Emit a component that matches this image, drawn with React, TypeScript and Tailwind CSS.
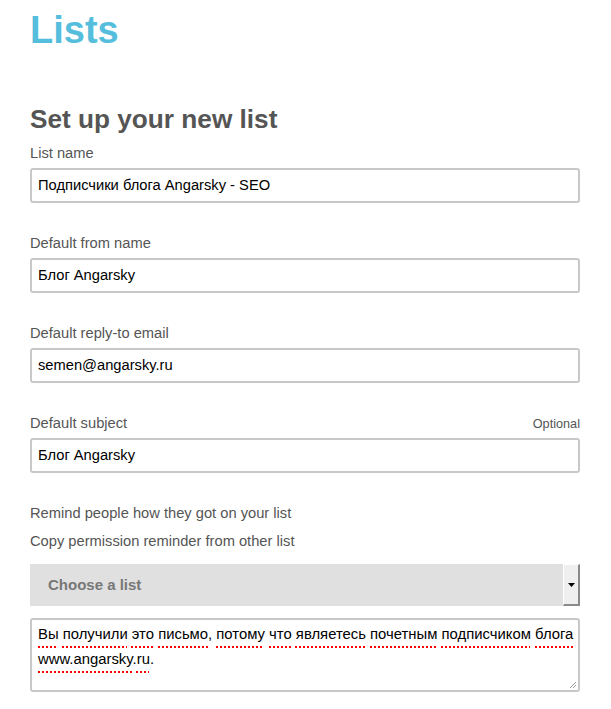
import React from "react";

const font = { fontFamily: '"Liberation Sans", Arial, sans-serif' };

function Field({ label, value, optional }: { label: string; value: string; optional?: boolean }) {
  return (
    <div className="flex flex-col">
      <div className="flex items-baseline justify-between h-[20px] leading-[20px]">
        <span className="text-[14.7px] text-[#555555]">{label}</span>
        {optional && <span className="text-[12.7px] text-[#555555]">Optional</span>}
      </div>
      <div className="mt-[5px] h-[35px] border-2 border-[#c8c8c8] rounded-[3px] bg-white flex items-center px-[6px]">
        <span className="text-[14.7px] text-black">{value}</span>
      </div>
    </div>
  );
}

function W({ children }: { children: React.ReactNode }) {
  return (
    <span className="underline decoration-dotted decoration-[#ff0000] decoration-2 underline-offset-[7px]">
      {children}
    </span>
  );
}

export default function App() {
  return (
    <div className="w-[611px] h-[709px] bg-white overflow-hidden" style={font}>
      <div className="pl-[30px] w-[580px]">
        <h1 className="mt-[10px] text-[38px] leading-[40px] font-bold text-[#55bedd]">Lists</h1>
        <h2 className="mt-[56px] text-[26.2px] leading-[26px] font-bold text-[#555555]">Set up your new list</h2>
        <div className="mt-[11px] flex flex-col gap-[30px]">
          <Field label="List name" value="Подписчики блога Angarsky - SEO" />
          <Field label="Default from name" value="Блог Angarsky" />
          <Field label="Default reply-to email" value="semen@angarsky.ru" />
          <Field label="Default subject" value="Блог Angarsky" optional />
        </div>
        <div className="mt-[30px] flex flex-col gap-[8px] text-[14.7px] leading-[20px] text-[#555555]">
          <div>Remind people how they got on your list</div>
          <div>Copy permission reminder from other list</div>
        </div>
        <div className="mt-[13px] h-[42px] bg-[#e0e0e0] flex items-stretch">
          <div className="flex-1 flex items-center pl-[18px] text-[15px] font-bold text-[#777777]">Choose a list</div>
          <div className="w-[17px] bg-[#efefef] border-l border-t border-l-white border-t-white border-r-2 border-b-2 border-r-[#8a8a8a] border-b-[#8a8a8a] flex items-center justify-center">
            <svg width="7" height="4" viewBox="0 0 7 4">
              <path d="M0 0H7L3.5 4Z" fill="#000" />
            </svg>
          </div>
        </div>
        <div className="relative mt-[12px] h-[74px] border-2 border-[#c8c8c8] rounded-[3px] bg-white pl-[6px] pt-[2px] text-[14.85px] leading-[25px] text-black">
          <div className="whitespace-nowrap">
            <W>Вы</W> <W>получили</W> <W>это</W> <W>письмо</W>, <W>потому</W> <W>что</W> <W>являетесь</W>{" "}
            <W>почетным</W> <W>подписчиком</W> <W>блога</W>
          </div>
          <div className="whitespace-nowrap">
            <W>www.angarsky</W>.<W>ru</W>.
          </div>
          <svg className="absolute right-[1px] bottom-[1px]" width="9" height="9" viewBox="0 0 9 9">
            <path d="M8 2L2 8M8 5L5 8" stroke="#a0a0a0" strokeWidth="1" />
          </svg>
        </div>
      </div>
    </div>
  );
}
